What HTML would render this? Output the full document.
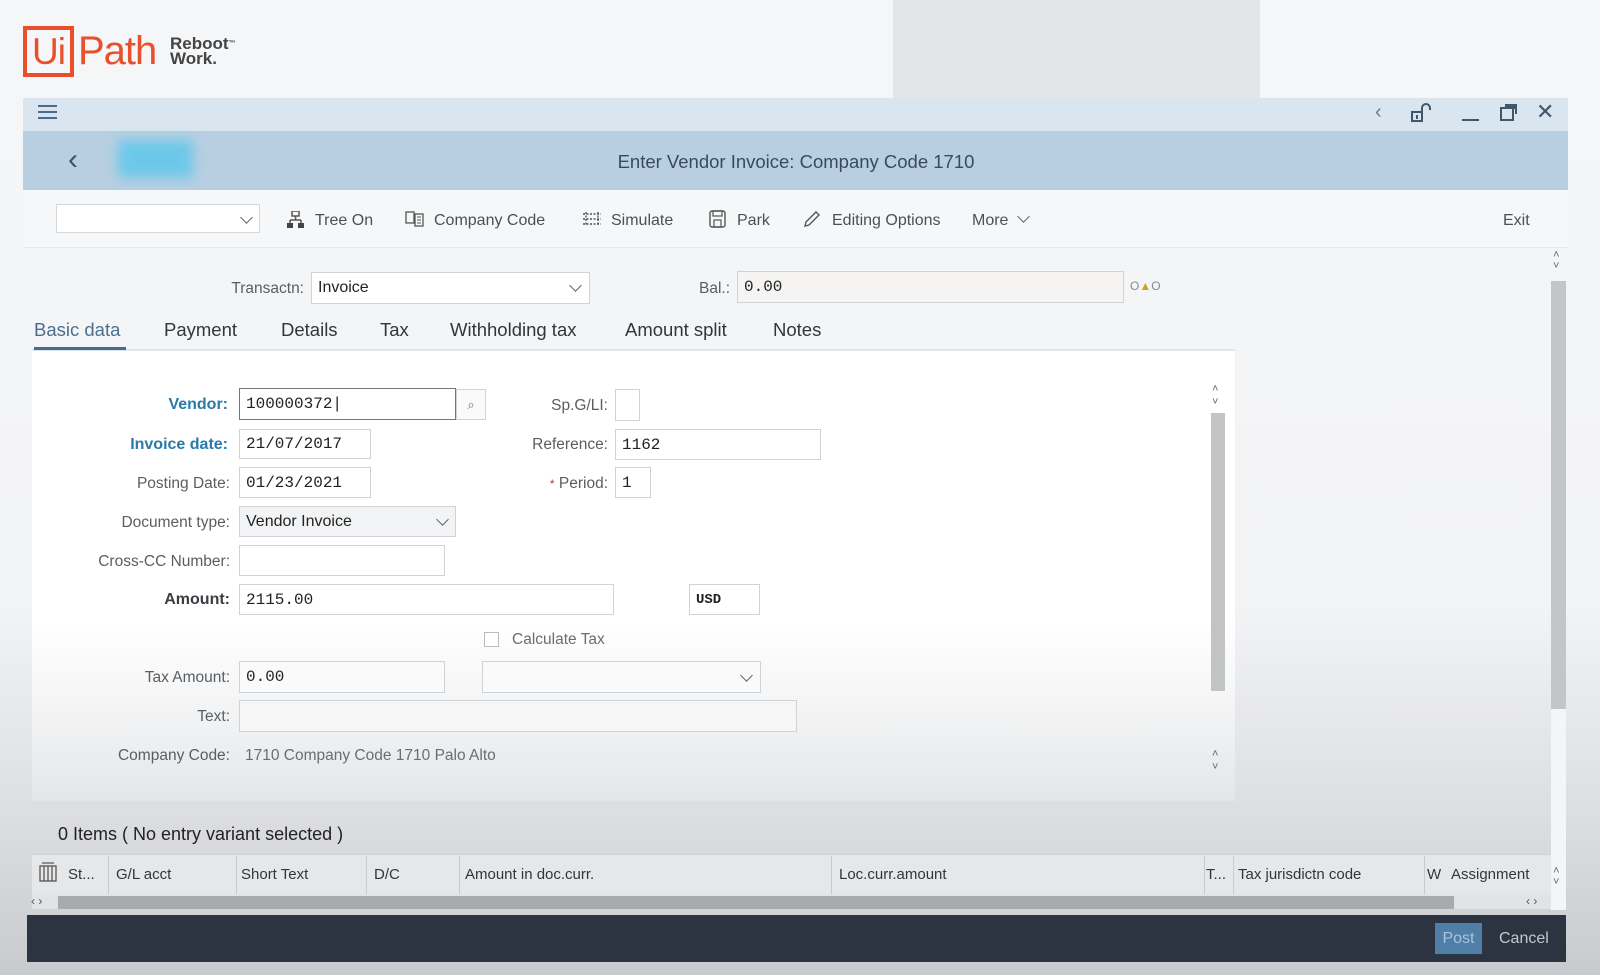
<!DOCTYPE html>
<html><head><meta charset="utf-8">
<style>
*{margin:0;padding:0;box-sizing:border-box}
body{width:1600px;height:975px;overflow:hidden;position:relative;font-family:"Liberation Sans",sans-serif;background:linear-gradient(#f5f6f8 0,#f3f4f6 600px,#dcdde0 820px,#c9cacd 975px);color:#32363a}
.a{position:absolute}
.lbl{position:absolute;text-align:right;font-size:15.5px;color:#5a5e62}
.inp{position:absolute;background:#fff;border:1px solid #cfd3d7;font-family:"Liberation Mono",monospace;font-size:16px;padding:0 6px;display:flex;align-items:center;color:#222}
.tb{position:absolute;top:212px;font-size:16px;color:#4a5058}
.tab{position:absolute;top:319px;font-size:18.5px;color:#32363a}
.th{position:absolute;top:866px;font-size:15px;color:#32363a}
.sep{position:absolute;top:856px;width:1px;height:38px;background:#c8cacc}
.chev{position:absolute;width:9px;height:9px;border-right:1.5px solid #666;border-bottom:1.5px solid #666;transform:rotate(45deg)}
</style></head><body>
<div class="a" style="left:893px;top:0;width:367px;height:98px;background:#e4e5e7"></div>
<div class="a" style="left:23px;top:26px;width:51px;height:51px;border:4px solid #e8502c;color:#e8502c;font-size:37px;line-height:43px;text-align:center;letter-spacing:-1px">Ui</div>
<div class="a" style="left:78px;top:29px;color:#e8502c;font-size:40px;letter-spacing:-1px">Path</div>
<div class="a" style="left:170px;top:36px;color:#444;font-size:17px;font-weight:bold;line-height:15px">Reboot<span style="font-size:7px;vertical-align:top">™</span><br>Work.</div>
<div class="a" style="left:23px;top:98px;width:1545px;height:33px;background:#d9e6ef"></div>
<div class="a" style="left:38px;top:105px;width:19px;height:2px;background:#4a6c8a;box-shadow:0 6px 0 #4a6c8a,0 12px 0 #4a6c8a"></div>
<div class="a" style="left:1375px;top:101px;font-size:20px;color:#6a7c8c">‹</div>
<svg class="a" style="left:1410px;top:103px" width="22" height="20"><rect x="2" y="9" width="10" height="9" fill="none" stroke="#40566a" stroke-width="2"/><path d="M12 9V5a4 4 0 0 1 8 0v2" fill="none" stroke="#40566a" stroke-width="2"/><rect x="6" y="12" width="2" height="4" fill="#40566a"/></svg>
<div class="a" style="left:1462px;top:119px;width:17px;height:2px;background:#40566a"></div>
<svg class="a" style="left:1499px;top:102px" width="20" height="20"><rect x="2" y="6" width="12" height="12" fill="none" stroke="#40566a" stroke-width="2"/><rect x="6" y="2" width="12" height="5" fill="#40566a"/><path d="M17 2v10" stroke="#40566a" stroke-width="2"/></svg>
<div class="a" style="left:1536px;top:99px;font-size:22px;color:#40566a">✕</div>
<div class="a" style="left:23px;top:131px;width:1545px;height:59px;background:#b8cfe2"></div>
<div class="a" style="left:68px;top:143px;font-size:30px;color:#3a5370">‹</div>
<div class="a" style="left:118px;top:140px;width:75px;height:38px;background:#6cc8ea;filter:blur(6px);border-radius:4px"></div>
<div class="a" style="left:560px;top:151px;width:472px;text-align:center;font-size:18.5px;color:#3b4a58">Enter Vendor Invoice: Company Code 1710</div>
<div class="a" style="left:23px;top:190px;width:1545px;height:58px;background:#f6f7f9;border-bottom:1px solid #e6e8ea"></div>
<div class="a" style="left:56px;top:204px;width:204px;height:29px;background:#fff;border:1px solid #d5d8db"></div>
<div class="chev" style="left:242px;top:213px"></div>
<svg class="a" style="left:287px;top:211px" width="18" height="17"><rect x="5" y="0" width="7" height="5" fill="none" stroke="#555" stroke-width="1.5"/><path d="M8.5 5v4M3 9h11M3 9v3M14 9v3" stroke="#555" stroke-width="1.5"/><rect x="0" y="12" width="6" height="5" fill="#444"/><rect x="11" y="12" width="6" height="5" fill="#444"/></svg>
<div class="tb" style="left:315px">Tree On</div>
<svg class="a" style="left:405px;top:211px" width="20" height="17"><rect x="1" y="1" width="8" height="11" fill="none" stroke="#555" stroke-width="1.3"/><rect x="10" y="3" width="8" height="12" fill="none" stroke="#555" stroke-width="1.3"/><path d="M12 6h4M12 9h4M12 12h4" stroke="#555"/></svg>
<div class="tb" style="left:434px">Company Code</div>
<svg class="a" style="left:582px;top:212px" width="20" height="14"><path d="M1 2h18M1 7h18M1 12h18M4 0v14M16 0v14" stroke="#555" stroke-width="1.4" stroke-dasharray="2 1.5"/></svg>
<div class="tb" style="left:611px">Simulate</div>
<svg class="a" style="left:709px;top:210px" width="17" height="18"><rect x="1" y="1" width="15" height="16" rx="2" fill="none" stroke="#555" stroke-width="1.4"/><rect x="4" y="1" width="9" height="5" fill="none" stroke="#555" stroke-width="1.2"/><rect x="5" y="10" width="7" height="7" fill="none" stroke="#555" stroke-width="1.2"/></svg>
<div class="tb" style="left:737px">Park</div>
<svg class="a" style="left:803px;top:210px" width="18" height="18"><path d="M2 16l1-4L13 2l3 3L6 15z" fill="none" stroke="#555" stroke-width="1.4"/></svg>
<div class="tb" style="left:832px">Editing Options</div>
<div class="tb" style="left:972px">More</div>
<div class="chev" style="left:1019px;top:212px"></div>
<div class="tb" style="left:1503px">Exit</div>
<div class="lbl" style="left:200px;top:280px;width:104px">Transactn:</div>
<div class="inp" style="left:311px;top:272px;width:279px;height:32px;font-family:'Liberation Sans',sans-serif">Invoice</div>
<div class="chev" style="left:571px;top:281px"></div>
<div class="lbl" style="left:680px;top:280px;width:50px">Bal.:</div>
<div class="inp" style="left:737px;top:271px;width:387px;height:32px;background:#f5f4f3">0.00</div>
<div class="a" style="left:1130px;top:279px;font-size:12px;color:#888">O<span style="color:#d9a020">▲</span>O</div>
<div class="tab" style="left:34px;color:#4a6e8e">Basic data</div>
<div class="tab" style="left:164px">Payment</div>
<div class="tab" style="left:281px">Details</div>
<div class="tab" style="left:380px">Tax</div>
<div class="tab" style="left:450px">Withholding tax</div>
<div class="tab" style="left:625px">Amount split</div>
<div class="tab" style="left:773px">Notes</div>
<div class="a" style="left:32px;top:349px;width:1203px;height:2px;background:#dbe6ee"></div>
<div class="a" style="left:34px;top:347px;width:92px;height:3px;background:#456d8f"></div>
<div class="a" style="left:32px;top:351px;width:1203px;height:450px;background:linear-gradient(#fff 0,#fff 270px,#f0f1f2 380px,#e4e5e7 450px)"></div>
<div class="lbl" style="left:80px;top:396px;width:148px;color:#2a79a8;font-weight:bold;font-size:16px">Vendor:</div>
<div class="inp" style="left:239px;top:388px;width:217px;height:32px;border-color:#777">100000372|</div>
<div class="a" style="left:456px;top:389px;width:30px;height:31px;border:1px solid #d0d3d6;background:#fafafa;font-size:13px;color:#777;text-align:center;line-height:29px">⌕</div>
<div class="lbl" style="left:80px;top:436px;width:148px;color:#2a79a8;font-weight:bold;font-size:16px">Invoice date:</div>
<div class="inp" style="left:239px;top:429px;width:132px;height:30px">21/07/2017</div>
<div class="lbl" style="left:80px;top:475px;width:150px">Posting Date:</div>
<div class="inp" style="left:239px;top:467px;width:132px;height:31px">01/23/2021</div>
<div class="lbl" style="left:60px;top:514px;width:170px">Document type:</div>
<div class="inp" style="left:239px;top:506px;width:217px;height:31px;background:#f2f3f4;font-family:'Liberation Sans',sans-serif">Vendor Invoice</div>
<div class="chev" style="left:438px;top:515px"></div>
<div class="lbl" style="left:60px;top:553px;width:170px">Cross-CC Number:</div>
<div class="inp" style="left:239px;top:545px;width:206px;height:31px"></div>
<div class="lbl" style="left:80px;top:591px;width:150px;font-weight:bold;font-size:16px;color:#3a3e42">Amount:</div>
<div class="inp" style="left:239px;top:584px;width:375px;height:31px">2115.00</div>
<div class="inp" style="left:689px;top:584px;width:71px;height:31px;font-size:14px;font-weight:bold">USD</div>
<div class="a" style="left:484px;top:632px;width:15px;height:15px;border:1px solid #bbb;background:#fff"></div>
<div class="a" style="left:512px;top:631px;font-size:15.5px;color:#6a6e72">Calculate Tax</div>
<div class="lbl" style="left:80px;top:669px;width:150px">Tax Amount:</div>
<div class="inp" style="left:239px;top:661px;width:206px;height:32px;background:#fafafa">0.00</div>
<div class="inp" style="left:482px;top:661px;width:279px;height:32px;background:#fafafa"></div>
<div class="chev" style="left:742px;top:671px"></div>
<div class="lbl" style="left:80px;top:708px;width:150px">Text:</div>
<div class="inp" style="left:239px;top:700px;width:558px;height:32px;background:#f6f6f7"></div>
<div class="lbl" style="left:60px;top:747px;width:170px">Company Code:</div>
<div class="a" style="left:245px;top:747px;font-size:15.5px;color:#6a6e72">1710 Company Code 1710 Palo Alto</div>
<div class="lbl" style="left:500px;top:397px;width:108px">Sp.G/LI:</div>
<div class="inp" style="left:615px;top:389px;width:25px;height:32px"></div>
<div class="lbl" style="left:500px;top:436px;width:108px">Reference:</div>
<div class="inp" style="left:615px;top:429px;width:206px;height:31px">1162</div>
<div class="lbl" style="left:500px;top:475px;width:108px"><span style="color:#c0392b;font-size:12px">*</span> Period:</div>
<div class="inp" style="left:615px;top:467px;width:36px;height:31px">1</div>
<div class="a" style="left:1212px;top:383px;font-size:11px;color:#666;line-height:13px">˄<br>˅</div>
<div class="a" style="left:1211px;top:413px;width:14px;height:278px;background:#c2c3c5"></div>
<div class="a" style="left:1212px;top:748px;font-size:11px;color:#666;line-height:13px">˄<br>˅</div>
<div class="a" style="left:1551px;top:250px;width:15px;height:660px;background:#f4f5f6"></div>
<div class="a" style="left:1553px;top:250px;font-size:11px;color:#666;line-height:11px">˄<br>˅</div>
<div class="a" style="left:1551px;top:281px;width:15px;height:428px;background:#c4c5c7"></div>
<div class="a" style="left:58px;top:824px;font-size:18px;color:#222">0 Items ( No entry variant selected )</div>
<div class="a" style="left:32px;top:854px;width:1519px;height:41px;background:#e6e7e9;border-top:1px solid #d0d2d4"></div>
<svg class="a" style="left:39px;top:862px" width="18" height="20"><rect x="1" y="4" width="16" height="15" fill="none" stroke="#555" stroke-width="1.3"/><path d="M5 4v15M9 4v15M13 4v15M3 1h12" stroke="#555" stroke-width="1.3"/></svg>
<div class="th" style="left:68px">St...</div><div class="sep" style="left:108px"></div>
<div class="th" style="left:116px">G/L acct</div><div class="sep" style="left:236px"></div>
<div class="th" style="left:241px">Short Text</div><div class="sep" style="left:366px"></div>
<div class="th" style="left:374px">D/C</div><div class="sep" style="left:459px"></div>
<div class="th" style="left:465px">Amount in doc.curr.</div><div class="sep" style="left:831px"></div>
<div class="th" style="left:839px">Loc.curr.amount</div><div class="sep" style="left:1204px"></div>
<div class="th" style="left:1206px">T...</div><div class="sep" style="left:1233px"></div>
<div class="th" style="left:1238px">Tax jurisdictn code</div><div class="sep" style="left:1424px"></div>
<div class="th" style="left:1427px">W</div>
<div class="th" style="left:1451px">Assignment</div>
<div class="a" style="left:1553px;top:866px;font-size:11px;color:#666;line-height:11px">˄<br>˅</div>
<div class="a" style="left:32px;top:895px;width:1519px;height:14px;background:#e2e3e5"></div>
<div class="a" style="left:31px;top:894px;font-size:12px;color:#555">‹ ›</div>
<div class="a" style="left:58px;top:896px;width:1396px;height:13px;background:#a9aaac"></div>
<div class="a" style="left:1526px;top:894px;font-size:12px;color:#555">‹ ›</div>
<div class="a" style="left:27px;top:915px;width:1539px;height:47px;background:#2b3440"></div>
<div class="a" style="left:1435px;top:923px;width:47px;height:31px;background:#4f7fa6;color:#a9c4da;font-size:16px;text-align:center;line-height:31px">Post</div>
<div class="a" style="left:1499px;top:930px;font-size:16px;color:#c2c8ce">Cancel</div>
</body></html>
